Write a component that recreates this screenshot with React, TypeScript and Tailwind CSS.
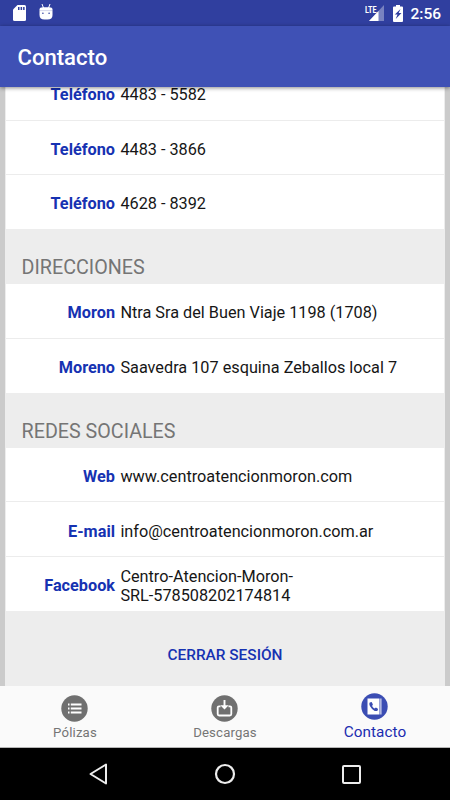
import { ReactNode } from "react";

interface ContactItem {
    label : string,
    value : string
}

interface SectionProps {
    title? : string,
    items : ContactItem[]
}

const phones : ContactItem[] = [
    { label : "Teléfono", value : "4483 - 5582" },
    { label : "Teléfono", value : "4483 - 3866" },
    { label : "Teléfono", value : "4628 - 8392" },
];

const addresses : ContactItem[] = [
    { label : "Moron", value : "Ntra Sra del Buen Viaje 1198 (1708)" },
    { label : "Moreno", value : "Saavedra 107 esquina Zeballos local 7" },
];

const networks : ContactItem[] = [
    { label : "Web", value : "www.centroatencionmoron.com" },
    { label : "E-mail", value : "info@centroatencionmoron.com.ar" },
    { label : "Facebook", value : "Centro-Atencion-Moron-\nSRL-578508202174814" },
];

function Section({ title, items } : SectionProps) {
    return(
        <section>
            {title && (
                <h2 className="flex h-[55px] items-end pb-[4px] pl-[16.6px] text-[19.7px] leading-[24px] text-[#757575]">{title}</h2>
            )}
            <ul className="divide-y divide-[#ececec] border-x border-[#ededed] bg-white">
                {items.map((item, i) => (
                    <li key={i} className="flex h-[54.4px] items-center pt-[4px] text-[16.25px] leading-[19.2px]">
                        <span className="w-[109px] shrink-0 text-right font-bold text-[#1632b2]">{item.label}</span>
                        <span className="ml-[5.4px] whitespace-pre text-[#161616]">{item.value}</span>
                    </li>
                ))}
            </ul>
        </section>
    )
}

function StatusBar() {
    return(
        <div className="flex h-[26px] shrink-0 items-center bg-[#303f9f] text-white">
            <svg className="ml-[13px]" width="13" height="16" viewBox="0 0 13 16" fill="white">
                <path d="M4.5 0H11.5Q13 0 13 1.5V14.5Q13 16 11.5 16H1.5Q0 16 0 14.5V4.5Z" />
                <path d="M5 2h1.5v3H5zM7.6 2h1.5v3H7.6zM10.1 2h1.5v3h-1.5z" fill="#303f9f" />
            </svg>
            <svg className="-mt-[2px] ml-[13px]" width="14" height="16" viewBox="0 0 14 16" fill="white">
                <path d="M3 0l1.5 4M11 0l-1.5 4" stroke="white" strokeWidth="1" />
                <path d="M.5 5.5Q.5 3.2 4 3.2h6q3.5 0 3.5 2.3V11q0 4.6-5 4.6h-3Q.5 15.6.5 11Z" />
                <path d="M.5 6.6h13" stroke="#303f9f" strokeOpacity=".25" strokeWidth=".8" />
                <circle cx="3.9" cy="9.3" r=".8" fill="#303f9f" />
                <circle cx="10.1" cy="9.3" r=".8" fill="#303f9f" />
            </svg>
            <div className="ml-auto flex items-center">
                <div className="relative h-[16px] w-[20px]">
                    <svg className="ml-[4px]" width="15" height="16" viewBox="0 0 15 16" fill="white">
                        <path d="M15 0V16H0Z" opacity=".35" />
                        <path d="M9.5 6V16H0Z" />
                    </svg>
                    <span className="absolute left-0 top-0 h-[8px] w-[14px] origin-left scale-x-[.76] bg-[#303f9f] text-[9.5px] font-bold leading-[9px]">LTE</span>
                </div>
                <svg className="ml-[8px]" width="10" height="17" viewBox="0 0 10 17" fill="white">
                    <path d="M3 0h4v1.5h2q1 0 1 1V16q0 1-1 1H1q-1 0-1-1V2.5q0-1 1-1h2Z" />
                    <path d="M7.5 4L1.8 9.5h2.7L2.7 14l5.8-6H5.7Z" fill="#303f9f" />
                </svg>
                <span className="ml-[7px] mr-[9px] mt-[2px] text-[15.5px] font-medium leading-[18px]">2:56</span>
            </div>
        </div>
    )
}

interface TabProps {
    label : string,
    active? : boolean,
    children : ReactNode
}

function Tab({ label, active, children } : TabProps) {
    return(
        <button className={active ? "flex w-[150px] flex-col items-center pt-[6.5px] text-[15.3px] text-[#1c2cb0]" : "flex w-[150px] flex-col items-center pt-[8.5px] text-[13.2px] text-[#757575]"}>
            <svg className="-ml-px" width="27" height="27" viewBox="0 0 27 27" fill="none" stroke="white">
                <circle cx="13.5" cy="13.5" r="13.2" fill={active ? "#3b4db3" : "#707070"} stroke="none" />
                {children}
            </svg>
            <span className={active ? "mt-[2.2px] leading-[20px] tracking-[.05px]" : "mt-[2.2px] leading-[18px] tracking-[.16px]"}>{label}</span>
        </button>
    )
}

export default function App() {
    return(
        <div className="flex h-[800px] w-[450px] flex-col overflow-hidden bg-black font-[Roboto,sans-serif]">
            <StatusBar />
            <header className="relative z-10 flex h-[61px] shrink-0 items-center bg-[#3f51b5] pl-[17.5px] pt-[3px] shadow-[0_1px_4px_rgba(0,0,0,0.45)]">
                <h1 className="text-[22.1px] font-medium text-white">Contacto</h1>
            </header>

            <main className="h-[599px] shrink-0 overflow-hidden bg-[#cbcbcb] px-[5px]">
                <div className="-mt-[20.9px] h-[621px] bg-[#ededed]">
                    <Section items={phones} />
                    <Section title="DIRECCIONES" items={addresses} />
                    <Section title="REDES SOCIALES" items={networks} />
                    <button className="flex h-[88px] w-full items-center justify-center pt-[1px] text-[15.4px] font-medium text-[#1632b2]">CERRAR SESIÓN</button>
                </div>
            </main>

            <nav className="flex h-[62px] shrink-0 items-start border-b border-[#b5b5b5] bg-[#fafafa]">
                <Tab label="Pólizas">
                    <path d="M7 9.5h1.5M7 13.5h1.5M7 17.5h1.5M9.8 9.5H20.5M9.8 13.5H20.5M9.8 17.5H20.5" strokeWidth="2" />
                </Tab>
                <Tab label="Descargas">
                    <path d="M9.5 11.3H8Q6.7 11.3 6.7 12.5V19Q6.7 20.5 8.2 20.5H18.8Q20.3 20.5 20.3 19V12.5Q20.3 11.3 19 11.3H17.5" strokeWidth="1.8" />
                    <path d="M13.5 5v8" strokeWidth="1.9" />
                    <path d="M9.3 10.3h8.4L13.5 14.5Z" fill="white" stroke="none" />
                </Tab>
                <Tab label="Contacto" active>
                    <path d="M6.5 5.5h12v16h-12Z M19.4 5.5h1v16h-1Z" fill="white" stroke="none" />
                    <path d="M8.7 9.4Q7.7 10.6 8.9 13.1Q10.8 16.7 13.7 17.9Q15.5 18.5 16.9 17.2V15.8L14.9 14.6L13.5 15.5Q11.9 14.5 11.1 12.9L11.9 11.6L10.7 9Z" fill="#3b4db3" stroke="none" />
                </Tab>
            </nav>

            <div className="flex h-[52px] shrink-0 items-center bg-black">
                <svg className="ml-[89px]" width="19" height="22" viewBox="0 0 19 22" fill="none" stroke="#ededed" strokeWidth="2" strokeLinejoin="round">
                    <path d="M17 1.5V20.5L1.5 11Z" />
                </svg>
                <svg className="ml-[106px]" width="22" height="22" viewBox="0 0 22 22" fill="none" stroke="#ededed" strokeWidth="2.2">
                    <circle cx="11" cy="11" r="9" />
                </svg>
                <svg className="ml-[106px]" width="19" height="19" viewBox="0 0 19 19" fill="none" stroke="#ededed" strokeWidth="2">
                    <rect x="1" y="1" width="17" height="17" rx="1" />
                </svg>
            </div>
        </div>
    )
}
